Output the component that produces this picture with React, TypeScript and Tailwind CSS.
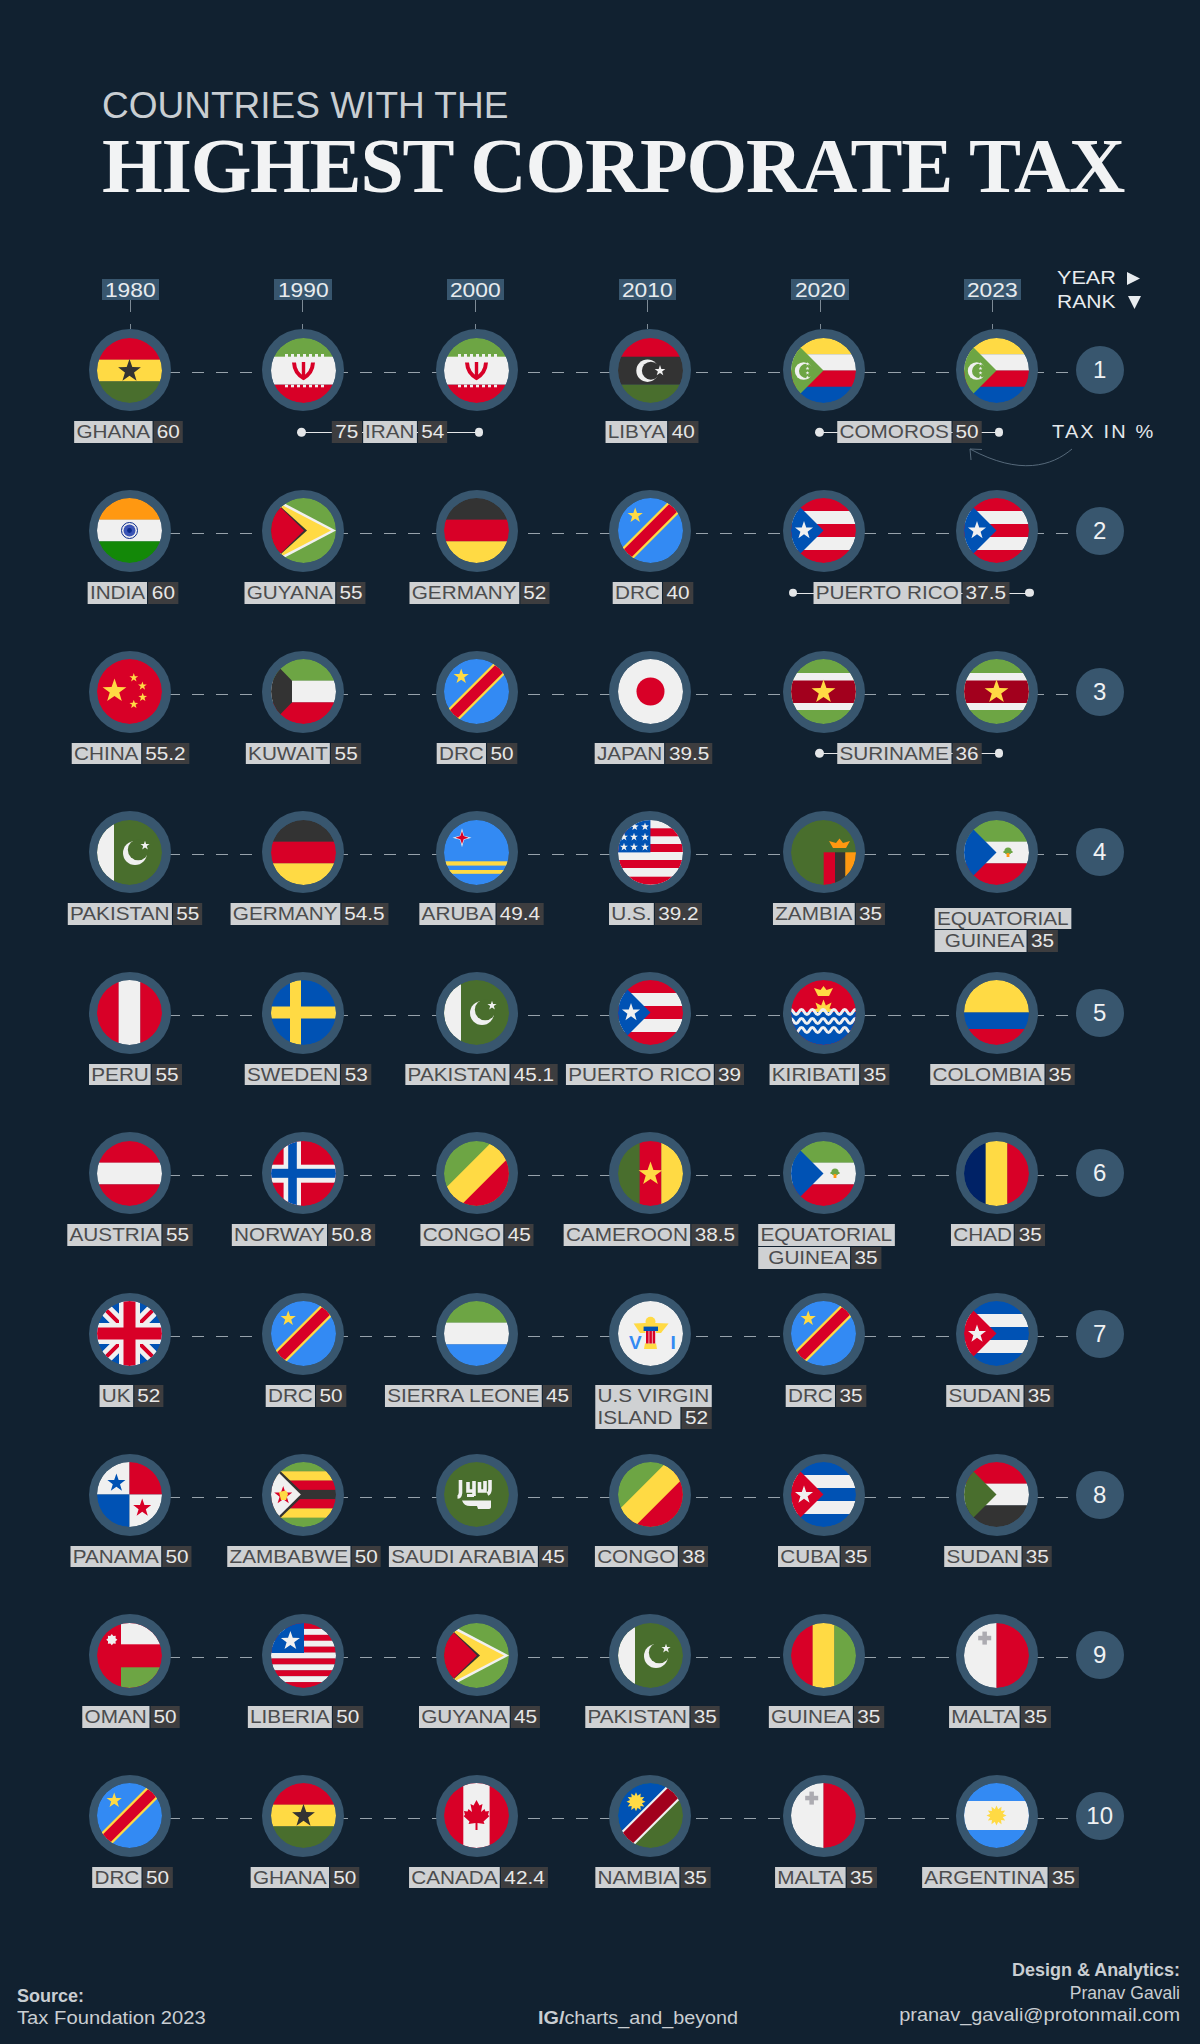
import React from "react";
import clsx from "clsx";

const R = "#d80027";
const Y = "#ffda44";
const D = "#333333";
const G = "#6da544";
const DG = "#496e2d";
const B = "#0052b4";
const LB = "#338af3";
const W = "#f0f0f0";
const O = "#ff9811";

function H({ c }: { c: string[] }) {
    const h = 65 / c.length;
    return <>{c.map((f, i) => <rect key={i} x="0" y={i * h} width="65" height={h + 0.2} fill={f} />)}</>;
}

function V({ c }: { c: string[] }) {
    const w = 65 / c.length;
    return <>{c.map((f, i) => <rect key={i} x={i * w} y="0" width={w + 0.2} height="65" fill={f} />)}</>;
}

function Star({ x, y, r, fill, n = 5, inner = 0.4 }: { x: number; y: number; r: number; fill: string; n?: number; inner?: number }) {
    const pts: string[] = [];
    for (let i = 0; i < n * 2; i++) {
        const a = -Math.PI / 2 + (i * Math.PI) / n;
        const rad = i % 2 ? r * inner : r;
        pts.push(`${x + rad * Math.cos(a)},${y + rad * Math.sin(a)}`);
    }
    return <polygon points={pts.join(" ")} fill={fill} />;
}

function Crescent({ x, y, r, ox, oy, ir, fill, bg }: { x: number; y: number; r: number; ox: number; oy: number; ir: number; fill: string; bg: string }) {
    return (
        <>
            <circle cx={x} cy={y} r={r} fill={fill} />
            <circle cx={x + ox} cy={y + oy} r={ir} fill={bg} />
        </>
    );
}

function Wave({ y }: { y: number }) {
    const d = `M-3 ${y} q2.7 -5 5.4 0` + " t5.4 0".repeat(13);
    return <path d={d} fill="none" stroke={W} strokeWidth="3" />;
}

const Tri = ({ fill, apex = 32.5 }: { fill: string; apex?: number }) => <polygon points={`0,0 ${apex},32.5 0,65`} fill={fill} />;

const Band = ({ w, fill }: { w: number; fill: string }) => (
    <rect x="-20" y={32.5 - w / 2} width="105" height={w} fill={fill} transform="rotate(-45 32.5 32.5)" />
);

const Tree = () => (
    <>
        <circle cx="44" cy="31" r="3.6" fill={G} />
        <rect x="39.5" y="31" width="9" height="2" fill={G} />
        <rect x="42.6" y="33" width="2.8" height="4" fill={O} />
    </>
);

const Pakistan = () => (
    <>
        <rect width="65" height="65" fill={DG} />
        <rect width="17" height="65" fill={W} />
        <Crescent x={38} y={33} r={12} ox={3.2} oy={-3.2} ir={10.4} fill={W} bg={DG} />
        <Star x={48} y={25.5} r={4.8} fill={W} />
    </>
);

const Flags: Record<string, React.ReactNode> = {
    ghana: (
        <>
            <H c={[R, Y, DG]} />
            <Star x={32.5} y={33} r={12} fill={D} />
        </>
    ),
    iran: (
        <>
            <rect width="65" height="19" fill={G} />
            <rect y="18.7" width="65" height="28" fill={W} />
            <rect y="46.7" width="65" height="19" fill={R} />
            {[14, 20, 26, 32, 38, 44, 50].map((x) => (
                <g key={x}>
                    <rect x={x} y="16" width="3" height="3" fill={W} />
                    <rect x={x} y="46.7" width="3" height="2.6" fill={W} />
                </g>
            ))}
            <path d="M23 24.5 C23.5 34 28 37.5 32.5 40 C37 37.5 41.5 34 42 24.5" fill="none" stroke={R} strokeWidth="4" />
            <rect x="30.8" y="24" width="3.4" height="16" fill={R} />
        </>
    ),
    libya: (
        <>
            <rect width="65" height="19" fill={R} />
            <rect y="18.7" width="65" height="28" fill={D} />
            <rect y="46.7" width="65" height="19" fill={DG} />
            <Crescent x={29.5} y={32.7} r={11.2} ox={3.4} oy={0} ir={9} fill={W} bg={D} />
            <Star x={42} y={32.7} r={5.6} fill={W} />
        </>
    ),
    comoros: (
        <>
            <H c={[Y, W, R, B]} />
            <Tri fill={G} />
            <Crescent x={12.6} y={33} r={8.8} ox={2.6} oy={0} ir={7.2} fill={W} bg={G} />
            {[26, 30.5, 35, 39.5].map((y) => <Star key={y} x={16.5} y={y} r={2} fill={W} />)}
        </>
    ),
    india: (
        <>
            <H c={[O, W, "#138808"]} />
            <circle cx="32.5" cy="32.5" r="8" fill={W} stroke="#0a2a8c" strokeWidth="1" />
            <circle cx="32.5" cy="32.5" r="6" fill="#3b54b5" />
            <circle cx="32.5" cy="32.5" r="2.4" fill="#0a2a8c" />
        </>
    ),
    guyana: (
        <>
            <rect width="65" height="65" fill={G} />
            <polygon points="9,3 65,32.5 9,62" fill={W} />
            <polygon points="9,6 60,32.5 9,59" fill={Y} />
            <Tri fill={D} apex={36} />
            <Tri fill={R} apex={33} />
        </>
    ),
    germany: <H c={[D, R, Y]} />,
    drc: (
        <>
            <rect width="65" height="65" fill={LB} />
            <Band w={15.6} fill={Y} />
            <Band w={11} fill={R} />
            <Star x={17.2} y={17.5} r={8} fill={Y} />
        </>
    ),
    puertorico: (
        <>
            <H c={[R, W, R, W, R]} />
            <Tri fill={B} />
            <Star x={13} y={32.5} r={9.5} fill={W} />
        </>
    ),
    china: (
        <>
            <rect width="65" height="65" fill={R} />
            <Star x={17.5} y={32} r={12.5} fill={Y} />
            <Star x={36.8} y={18.7} r={4.6} fill={Y} />
            <Star x={45.4} y={27} r={4.6} fill={Y} />
            <Star x={45.7} y={38.3} r={4.6} fill={Y} />
            <Star x={36.8} y={45.3} r={4.6} fill={Y} />
        </>
    ),
    kuwait: (
        <>
            <H c={[G, W, R]} />
            <polygon points="0,0 21,21.7 21,43.3 0,65" fill={D} />
        </>
    ),
    japan: (
        <>
            <rect width="65" height="65" fill={W} />
            <circle cx="32.5" cy="32.5" r="14" fill={R} />
        </>
    ),
    suriname: (
        <>
            <H c={[G]} />
            <rect y="14" width="65" height="37" fill={W} />
            <rect y="21.5" width="65" height="22.5" fill="#a2001d" />
            <Star x={32.5} y={33} r={12.5} fill={Y} />
        </>
    ),
    pakistan: <Pakistan />,
    aruba: (
        <>
            <rect width="65" height="65" fill={LB} />
            <Star x={18} y={17.7} r={9.5} fill={W} n={4} inner={0.3} />
            <Star x={18} y={17.7} r={6.6} fill={R} n={4} inner={0.35} />
            <rect y="41.3" width="65" height="4.3" fill={Y} />
            <rect y="50" width="65" height="3.8" fill={Y} />
        </>
    ),
    us: (
        <>
            <rect width="65" height="65" fill={W} />
            {[8.3, 24, 40, 56.7].map((y) => <rect key={y} y={y} width="65" height={8} fill={R} />)}
            <rect width="32.4" height="32.4" fill={B} />
            {[[16.7, 6.7], [27, 6.7], [6, 17], [16, 17], [27, 17], [6, 27], [16, 27], [27, 27]].map(([x, y]) => (
                <Star key={`${x}-${y}`} x={x} y={y} r={4.2} fill={W} />
            ))}
        </>
    ),
    zambia: (
        <>
            <rect width="65" height="65" fill={DG} />
            <rect x="32.7" y="32.3" width="11.4" height="33" fill={R} />
            <rect x="44" y="32.3" width="10.4" height="33" fill={D} />
            <rect x="54.3" y="32.3" width="11" height="33" fill={O} />
            <polygon points="38,21 45,23 48.5,18.5 52,23 59,21 55,28 42,28" fill={O} />
        </>
    ),
    eqguinea: (
        <>
            <H c={[G, W, R]} />
            <Tri fill={B} />
            <Tree />
        </>
    ),
    peru: <V c={[R, W, R]} />,
    sweden: (
        <>
            <rect width="65" height="65" fill={B} />
            <rect x="19" y="0" width="11" height="65" fill={Y} />
            <rect x="0" y="26.5" width="65" height="12" fill={Y} />
        </>
    ),
    kiribati: (
        <>
            <rect width="65" height="65" fill={R} />
            <polygon points="23,8 29.5,10 32.5,6 35.5,10 42,8 38,16 27,16" fill={Y} />
            <Star x={32.5} y={32} r={12.5} fill={Y} n={9} inner={0.55} />
            <rect y="32" width="65" height="33" fill={B} />
            <Wave y={32} />
            <Wave y={41} />
            <Wave y={50} />
        </>
    ),
    colombia: (
        <>
            <rect width="65" height="32.5" fill={Y} />
            <rect y="32.5" width="65" height="16.5" fill={B} />
            <rect y="49" width="65" height="16" fill={R} />
        </>
    ),
    austria: <H c={[R, W, R]} />,
    norway: (
        <>
            <rect width="65" height="65" fill={R} />
            <rect x="12.6" width="17.4" height="65" fill={W} />
            <rect y="23.7" width="65" height="18" fill={W} />
            <rect x="17.2" width="8.6" height="65" fill={B} />
            <rect y="27.8" width="65" height="9" fill={B} />
        </>
    ),
    congo: (
        <>
            <rect width="65" height="65" fill={G} />
            <polygon points="65,0 65,65 0,65" fill={R} />
            <Band w={23} fill={Y} />
        </>
    ),
    cameroon: (
        <>
            <V c={[DG, R, Y]} />
            <Star x={32.5} y={33} r={12.5} fill={Y} />
        </>
    ),
    chad: <V c={["#002266", Y, R]} />,
    uk: (
        <>
            <rect width="65" height="65" fill={B} />
            <path d="M0 0 L65 65 M65 0 L0 65" stroke={W} strokeWidth="13" />
            <path d="M0 0 L65 65 M65 0 L0 65" stroke={R} strokeWidth="4" />
            <rect x="22" width="21" height="65" fill={W} />
            <rect y="22" width="65" height="21" fill={W} />
            <rect x="26.5" width="12" height="65" fill={R} />
            <rect y="26.5" width="65" height="12" fill={R} />
        </>
    ),
    sierraleone: <H c={[G, W, LB]} />,
    usvi: (
        <>
            <rect width="65" height="65" fill={W} />
            <polygon points="15.6,22.5 27,22 38,22 50.6,22.5 43,32 22,32" fill={Y} />
            <circle cx="32.5" cy="20.8" r="5" fill={Y} />
            <polygon points="27,42 38,42 39,48 26,48" fill={Y} />
            <rect x="25.6" y="25.6" width="14.4" height="4.4" fill={B} />
            <rect x="27.4" y="30" width="10.6" height="12.5" fill={W} />
            <rect x="28" y="30" width="2.6" height="12.5" fill={R} />
            <rect x="31.3" y="30" width="2.6" height="12.5" fill={R} />
            <rect x="34.6" y="30" width="2.6" height="12.5" fill={R} />
            <text x="11" y="47.5" fontSize="19" fontWeight="700" fill={LB} fontFamily="Liberation Sans, sans-serif">V</text>
            <text x="52.5" y="47.5" fontSize="19" fontWeight="700" fill={LB} fontFamily="Liberation Sans, sans-serif">I</text>
        </>
    ),
    cuba: (
        <>
            <H c={[B, W, B, W, B]} />
            <Tri fill={R} />
            <Star x={13} y={33} r={9.5} fill={W} />
        </>
    ),
    sudan: (
        <>
            <H c={[R, W, D]} />
            <Tri fill={DG} />
        </>
    ),
    panama: (
        <>
            <rect width="32.5" height="32.5" fill={W} />
            <rect x="32.5" width="32.5" height="32.5" fill={R} />
            <rect y="32.5" width="32.5" height="32.5" fill={B} />
            <rect x="32.5" y="32.5" width="32.5" height="32.5" fill={W} />
            <Star x={19.4} y={21} r={9.5} fill={B} />
            <Star x={45.2} y={46} r={9.5} fill={R} />
        </>
    ),
    zimbabwe: (
        <>
            <H c={[G, Y, R, D, R, Y, G]} />
            <Tri fill={D} apex={33.5} />
            <polygon points="0,3 29.8,32.5 0,62" fill={W} />
            <Star x={12.2} y={33.5} r={9.5} fill={R} />
            <polygon points="8,30 15,28.5 17,32 15,38 10,38" fill={Y} />
        </>
    ),
    saudi: (
        <>
            <rect width="65" height="65" fill={DG} />
            <path d="M16.5 18 V31 Q16 35 13.5 35 M24 20 V29 H30 V20 M30 19 V34 M35.5 20 V29 H41 V19 M46 18 V27 Q46 31 43.5 32" fill="none" stroke={W} strokeWidth="3.6" />
            <rect x="23" y="32" width="7" height="3" fill={W} />
            <path d="M18 38.5 H47 V45 Q47 47 44 47 H34 L33 44 H26 Q20 44 18 38.5 Z" fill={W} />
        </>
    ),
    oman: (
        <>
            <rect width="65" height="65" fill={R} />
            <rect x="24" width="41" height="21.3" fill={W} />
            <rect x="24" y="44.3" width="41" height="21" fill={G} />
            <Star x={14.8} y={16.7} r={5.6} fill={W} n={8} inner={0.72} />
        </>
    ),
    liberia: (
        <>
            <H c={[R, W, R, W, R, W, R, W, R, W, R]} />
            <rect width="33" height="30" fill={B} />
            <Star x={19.4} y={18} r={10} fill={W} />
        </>
    ),
    canada: (
        <>
            <rect width="65" height="65" fill={R} />
            <rect x="19.3" width="26.3" height="65" fill={W} />
            <polygon
                points="32.5,17 35.5,22.5 38.5,21 37,29 40.5,26 41.5,28.5 45,28 44,32 45.5,33 39.5,38.5 40.5,41 33.5,40 33.5,47 31.5,47 31.5,40 24.5,41 25.5,38.5 19.5,33 21,32 20,28 23.5,28.5 24.5,26 28,29 26.5,21 29.5,22.5"
                fill={R}
            />
        </>
    ),
    namibia: (
        <>
            <rect width="65" height="65" fill={DG} />
            <polygon points="0,0 65,0 0,65" fill={B} />
            <Band w={18.7} fill={W} />
            <Band w={14.5} fill="#a2001d" />
            <Star x={18} y={18.7} r={9.5} fill={Y} n={12} inner={0.65} />
        </>
    ),
    guinea: <V c={[R, Y, G]} />,
    malta: (
        <>
            <V c={[W, R]} />
            <rect x="14.2" y="12.8" width="13" height="4.5" fill="#acabb1" />
            <rect x="18.4" y="8.6" width="4.5" height="13" fill="#acabb1" />
        </>
    ),
    argentina: (
        <>
            <rect width="65" height="65" fill={LB} />
            <rect y="18" width="65" height="29" fill={W} />
            <Star x={32.5} y={32.5} r={10} fill={Y} n={12} inner={0.65} />
        </>
    ),
};

type Label = {
    name: string;
    tax: string;
    before?: string;
    span?: string;
    shift?: string;
    second?: string;
};

type Row = { rank: number; flags: string[]; labels: Label[] };

const rows: Row[] = [
    {
        rank: 1,
        flags: ["ghana", "iran", "iran", "libya", "comoros", "comoros"],
        labels: [
            { name: "GHANA", tax: "60", shift: "-translate-x-[1px]" },
            { name: "IRAN", tax: "54", before: "75", span: "w-[186px]" },
            { name: "LIBYA", tax: "40", shift: "translate-x-[1.5px]" },
            { name: "COMOROS", tax: "50", span: "w-[188px] -translate-x-[1px]" },
        ],
    },
    {
        rank: 2,
        flags: ["india", "guyana", "germany", "drc", "puertorico", "puertorico"],
        labels: [
            { name: "INDIA", tax: "60", shift: "translate-x-[2.5px]" },
            { name: "GUYANA", tax: "55", shift: "translate-x-[2px]" },
            { name: "GERMANY", tax: "52", shift: "translate-x-[3px]" },
            { name: "DRC", tax: "40", shift: "translate-x-[3px]" },
            { name: "PUERTO RICO", tax: "37.5", span: "w-[245px] translate-x-[1px]" },
        ],
    },
    {
        rank: 3,
        flags: ["china", "kuwait", "drc", "japan", "suriname", "suriname"],
        labels: [
            { name: "CHINA", tax: "55.2" },
            { name: "KUWAIT", tax: "55" },
            { name: "DRC", tax: "50" },
            { name: "JAPAN", tax: "39.5", shift: "translate-x-[3px]" },
            { name: "SURINAME", tax: "36", span: "w-[188px] -translate-x-[1px]" },
        ],
    },
    {
        rank: 4,
        flags: ["pakistan", "germany", "aruba", "us", "zambia", "eqguinea"],
        labels: [
            { name: "PAKISTAN", tax: "55", shift: "translate-x-[5px]" },
            { name: "GERMANY", tax: "54.5", shift: "translate-x-[6px]" },
            { name: "ARUBA", tax: "49.4", shift: "translate-x-[5px]" },
            { name: "U.S.", tax: "39.2", shift: "translate-x-[5px]" },
            { name: "ZAMBIA", tax: "35", shift: "translate-x-[6px]" },
            { name: "EQUATORIAL\nGUINEA", tax: "35", shift: "translate-x-[6px] mt-[4.5px]", second: "pl-[9px]" },
        ],
    },
    {
        rank: 5,
        flags: ["peru", "sweden", "pakistan", "puertorico", "kiribati", "colombia"],
        labels: [
            { name: "PERU", tax: "55", shift: "translate-x-[5px]" },
            { name: "SWEDEN", tax: "53", shift: "translate-x-[4.5px]" },
            { name: "PAKISTAN", tax: "45.1", shift: "translate-x-[4.5px]" },
            { name: "PUERTO RICO", tax: "39", shift: "translate-x-[5.5px]" },
            { name: "KIRIBATI", tax: "35", shift: "translate-x-[6px]" },
            { name: "COLOMBIA", tax: "35", shift: "translate-x-[6px]" },
        ],
    },
    {
        rank: 6,
        flags: ["austria", "norway", "congo", "cameroon", "eqguinea", "chad"],
        labels: [
            { name: "AUSTRIA", tax: "55" },
            { name: "NORWAY", tax: "50.8", shift: "translate-x-[0.5px]" },
            { name: "CONGO", tax: "45", shift: "translate-x-[0.5px]" },
            { name: "CAMEROON", tax: "38.5", shift: "translate-x-[1px]" },
            { name: "EQUATORIAL\nGUINEA", tax: "35", shift: "translate-x-[2.5px]", second: "pl-[9px]" },
            { name: "CHAD", tax: "35", shift: "translate-x-[1px]" },
        ],
    },
    {
        rank: 7,
        flags: ["uk", "drc", "sierraleone", "usvi", "drc", "cuba"],
        labels: [
            { name: "UK", tax: "52", shift: "translate-x-[2px]" },
            { name: "DRC", tax: "50", shift: "translate-x-[2px]" },
            { name: "SIERRA LEONE", tax: "45", shift: "translate-x-[2px]" },
            { name: "U.S VIRGIN\nISLAND", tax: "52", shift: "translate-x-[3.5px]", second: "flex-1" },
            { name: "DRC", tax: "35", shift: "translate-x-[2px]" },
            { name: "SUDAN", tax: "35", shift: "translate-x-[3px]" },
        ],
    },
    {
        rank: 8,
        flags: ["panama", "zimbabwe", "saudi", "congo", "cuba", "sudan"],
        labels: [
            { name: "PANAMA", tax: "50", shift: "translate-x-[1px]" },
            { name: "ZAMBABWE", tax: "50", shift: "translate-x-[0.5px]" },
            { name: "SAUDI ARABIA", tax: "45", shift: "translate-x-[1.5px]" },
            { name: "CONGO", tax: "38", shift: "translate-x-[2px]" },
            { name: "CUBA", tax: "35", shift: "translate-x-[1px]" },
            { name: "SUDAN", tax: "35", shift: "translate-x-[1px]" },
        ],
    },
    {
        rank: 9,
        flags: ["oman", "liberia", "guyana", "pakistan", "guinea", "malta"],
        labels: [
            { name: "OMAN", tax: "50", shift: "translate-x-[1.5px]" },
            { name: "LIBERIA", tax: "50", shift: "translate-x-[2px]" },
            { name: "GUYANA", tax: "45", shift: "translate-x-[2.5px]" },
            { name: "PAKISTAN", tax: "35", shift: "translate-x-[2.5px]" },
            { name: "GUINEA", tax: "35", shift: "translate-x-[3px]" },
            { name: "MALTA", tax: "35", shift: "translate-x-[2.5px]" },
        ],
    },
    {
        rank: 10,
        flags: ["drc", "ghana", "canada", "namibia", "malta", "argentina"],
        labels: [
            { name: "DRC", tax: "50", shift: "translate-x-[2.5px]" },
            { name: "GHANA", tax: "50", shift: "translate-x-[1.5px]" },
            { name: "CANADA", tax: "42.4", shift: "translate-x-[1.5px]" },
            { name: "NAMBIA", tax: "35", shift: "translate-x-[2.5px]" },
            { name: "MALTA", tax: "35", shift: "translate-x-[2.5px]" },
            { name: "ARGENTINA", tax: "35", shift: "translate-x-[3.5px]" },
        ],
    },
];

const years = ["1980", "1990", "2000", "2010", "2020", "2023"];

const nameChip = "bg-[#cfd1d3] text-[#4b4c4e] px-[2px]";
const taxChip = "bg-[#3d3d3f] text-[#e8e8e8] px-[3px]";

function Chip({ name, tax, before, second }: Label) {
    const lines = name.split("\n");
    if (lines.length === 2) {
        return (
            <div className="flex scale-x-[1.12] flex-col items-start gap-[0.8px] text-[18.5px] leading-[21.7px] whitespace-nowrap">
                <span className={nameChip}>{lines[0]}</span>
                <div className="flex w-full gap-px">
                    <span className={clsx(nameChip, second)}>{lines[1]}</span>
                    <span className={taxChip}>{tax}</span>
                </div>
            </div>
        );
    }
    return (
        <div className="flex scale-x-[1.12] gap-px text-[18.5px] leading-[21.7px] whitespace-nowrap">
            {before && <span className={taxChip}>{before}</span>}
            <span className={nameChip}>{name}</span>
            <span className={taxChip}>{tax}</span>
        </div>
    );
}

function SpanChip(label: Label) {
    return (
        <div className={clsx("relative flex items-center justify-center", label.span)}>
            <div className="absolute inset-x-[4px] top-1/2 h-px bg-[#e4e6e8]" />
            <div className="absolute left-0 top-1/2 size-[8.5px] -translate-y-1/2 rounded-full bg-[#e4e6e8]" />
            <div className="absolute right-0 top-1/2 size-[8.5px] -translate-y-1/2 rounded-full bg-[#e4e6e8]" />
            <div className="relative">
                <Chip {...label} />
            </div>
        </div>
    );
}

function Flag({ code }: { code: string }) {
    return (
        <div className="relative flex justify-center">
            <div className="size-[82px] rounded-full bg-[#38566e] p-[8.5px]">
                <svg viewBox="0 0 65 65" className="size-[65px] rounded-full">
                    <defs>
                        <clipPath id={`c-${code}`}>
                            <circle cx="32.5" cy="32.5" r="32.5" />
                        </clipPath>
                    </defs>
                    <g clipPath={`url(#c-${code})`}>{Flags[code]}</g>
                </svg>
            </div>
        </div>
    );
}

function RankRow({ row }: { row: Row }) {
    return (
        <div className="relative h-[160.6px]">
            <div className="absolute left-[120.3px] top-[43px] h-px w-[956px] bg-[repeating-linear-gradient(90deg,#97a2ab_0_12.5px,transparent_12.5px_24px)]" />
            <div className="relative flex items-center">
                <div className="ml-[43.3px] grid grid-cols-[repeat(6,173.4px)]">
                    {row.flags.map((f, i) => <Flag key={i} code={f} />)}
                </div>
                <div className="-ml-[8px] flex size-[48px] items-center justify-center rounded-full bg-[#38566e] text-[24px] text-[#f0f2f4]">
                    {row.rank}
                </div>
            </div>
            <div className="ml-[43.3px] mt-[10px] grid w-[1040.4px] grid-cols-[repeat(6,173.4px)]">
                {row.labels.map((l) =>
                    l.span ? (
                        <div key={l.name} className="col-span-2 flex justify-center">
                            <SpanChip {...l} />
                        </div>
                    ) : (
                        <div key={l.name} className={clsx("flex items-start justify-center", l.shift)}>
                            <Chip {...l} />
                        </div>
                    ),
                )}
            </div>
        </div>
    );
}

export default function App() {
    return (
        <div className="relative h-[2044px] w-[1200px] overflow-hidden bg-[#112130] font-['Liberation_Sans',sans-serif]">
            <header className="pl-[102px] pt-[86.4px]">
                <div className="text-[37px] leading-[40px] text-[#c9ced2]">COUNTRIES WITH THE</div>
                <h1 className="font-['Liberation_Serif',serif] text-[78px] font-bold leading-[80px] tracking-[-1.2px] text-[#f2f3f4]">
                    HIGHEST CORPORATE TAX
                </h1>
            </header>

            <div className="mt-[72.6px] flex">
                <div className="ml-[44.3px] grid shrink-0 grid-cols-[repeat(6,172.4px)]">
                    {years.map((y) => (
                        <div key={y} className="flex flex-col items-center">
                            <div className="flex h-[21.4px] w-[57.4px] items-center justify-center bg-[#38566e]">
                                <span className="scale-x-[1.14] text-[20px] text-[#e8ecef]">{y}</span>
                            </div>
                            <div className="h-[12px] w-px bg-[#7d8a95]" />
                            <div className="mt-[12px] h-[5px] w-px bg-[#7d8a95]" />
                        </div>
                    ))}
                </div>
                <div className="-ml-[21.7px] -mt-[12.5px] text-[18px] leading-[24px] text-[#e8ecef]">
                    <div className="flex items-center">
                        <span className="w-[70px] origin-left scale-x-[1.2]">YEAR</span>
                        <svg width="13" height="13" viewBox="0 0 13 13"><polygon points="0,0 13,6.5 0,13" fill="#e8ecef" /></svg>
                    </div>
                    <div className="flex items-center">
                        <span className="w-[71px] origin-left scale-x-[1.17]">RANK</span>
                        <svg width="13" height="13" viewBox="0 0 13 13"><polygon points="0,0 13,0 6.5,13" fill="#e8ecef" /></svg>
                    </div>
                </div>
            </div>

            <main>
                {rows.map((r) => <RankRow key={r.rank} row={r} />)}
            </main>

            <div className="absolute left-[1051.5px] top-[421px] origin-left scale-x-[1.08] text-[18.5px] leading-[22px] tracking-[2px] whitespace-nowrap text-[#e4e7ea]">
                TAX IN %
            </div>
            <svg className="absolute left-[960px] top-[440px]" width="120" height="40" viewBox="0 0 120 40" fill="none" stroke="#56697a" strokeWidth="1">
                <path d="M112 9 C92 26 60 36 10 9" />
                <path d="M22 9.5 L10 9 L11 20" />
            </svg>

            <footer className="mt-[24px] flex items-end pl-[17px] pr-[20px] text-[17.5px] leading-[22.5px] text-[#c9ced2]">
                <div className="w-[521px] origin-left scale-x-[1.155]">
                    <div className="origin-left scale-x-[0.89] font-bold">Source:</div>
                    <div>Tax Foundation 2023</div>
                </div>
                <div className="w-[200px] origin-left scale-x-[1.13] whitespace-nowrap">
                    <span className="font-bold">IG/</span>charts_and_beyond
                </div>
                <div className="mb-[3px] flex-1 origin-right scale-x-[1.14] text-right">
                    <div className="origin-right scale-x-[0.9] font-bold">Design &amp; Analytics:</div>
                    <div className="origin-right scale-x-[0.88]">Pranav Gavali</div>
                    <div>pranav_gavali@protonmail.com</div>
                </div>
            </footer>
        </div>
    );
}
